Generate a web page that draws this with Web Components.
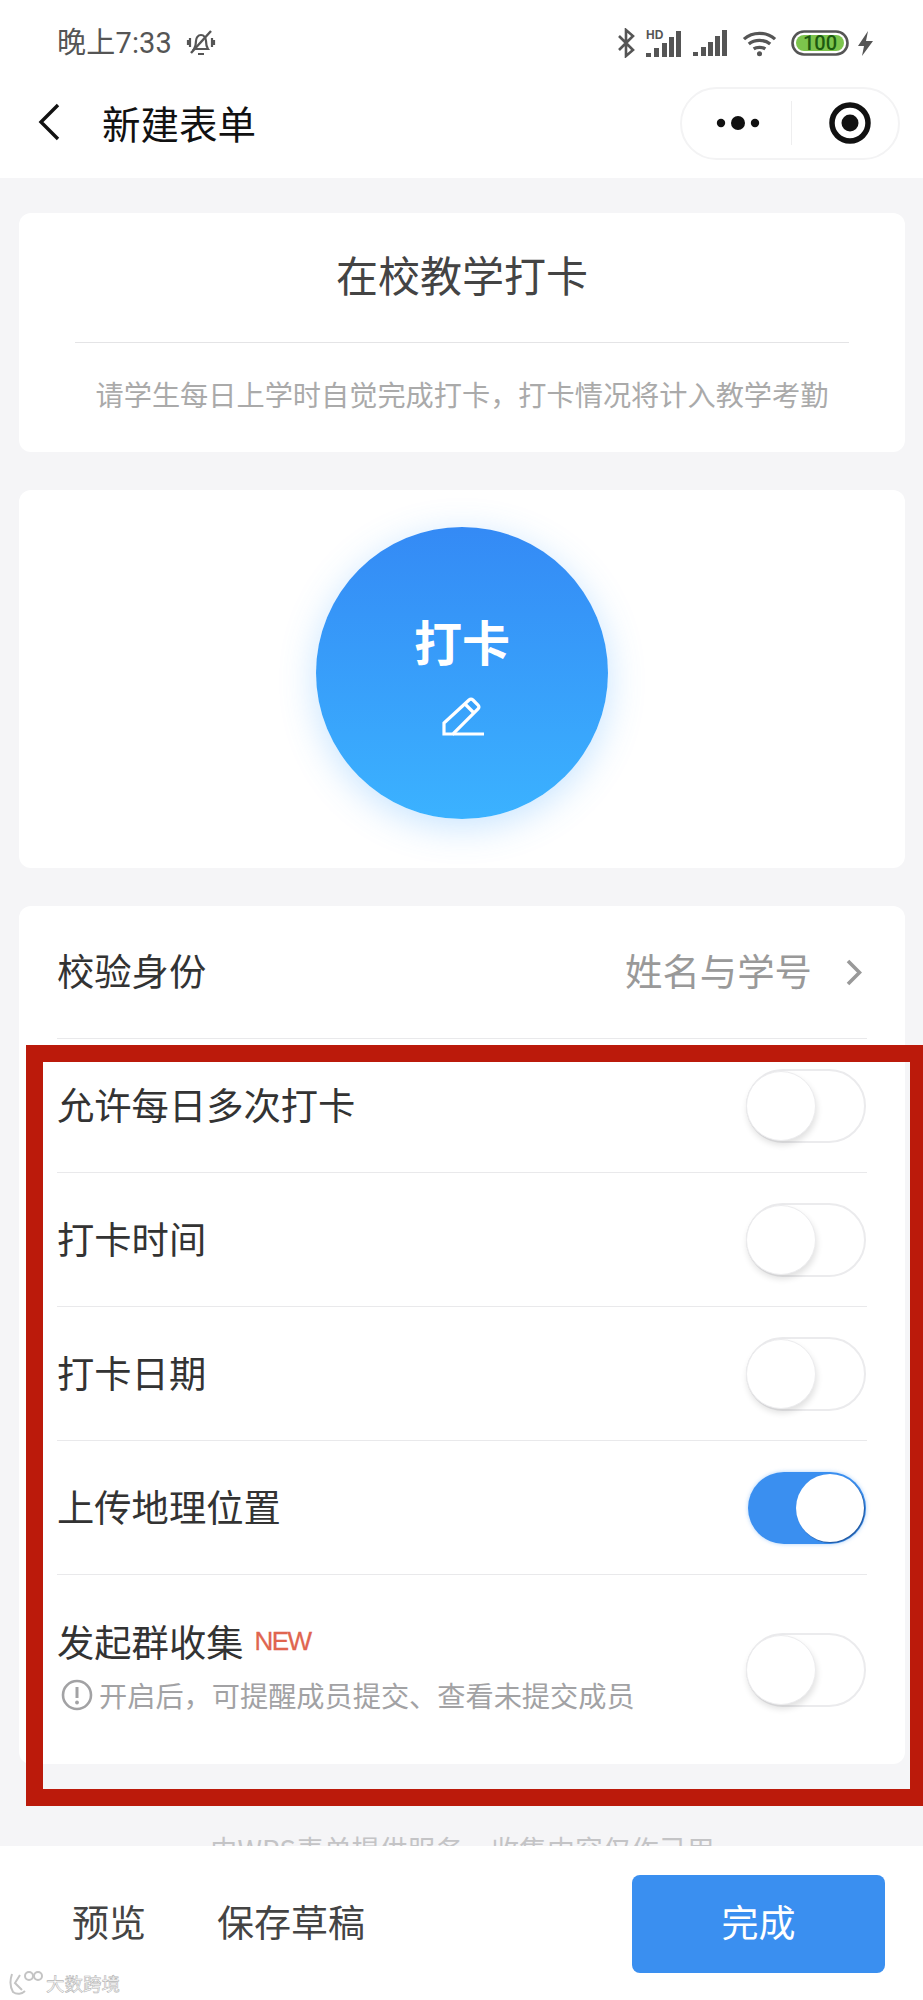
<!DOCTYPE html>
<html lang="zh-CN">
<head>
<meta charset="utf-8">
<title>新建表单</title>
<style>
  html, body { margin: 0; padding: 0; }
  body {
    width: 923px;
    height: 2000px;
    overflow: hidden;
    position: relative;
    display: flex;
    flex-direction: column;
    background: #f5f5f7;
    font-family: "Noto Sans CJK SC", "Liberation Sans", sans-serif;
    color: #333;
  }
</style>
</head>
<body>
  <status-bar></status-bar>
  <nav-bar title="新建表单"></nav-bar>

  <form-body>
    <title-card
      heading="在校教学打卡"
      note="请学生每日上学时自觉完成打卡，打卡情况将计入教学考勤"></title-card>
    <stamp-card label="打卡"></stamp-card>
    <settings-card>
      <link-row label="校验身份" value="姓名与学号"></link-row>
      <toggle-row label="允许每日多次打卡"></toggle-row>
      <toggle-row label="打卡时间"></toggle-row>
      <toggle-row label="打卡日期"></toggle-row>
      <toggle-row label="上传地理位置" on></toggle-row>
      <toggle-row label="发起群收集" badge="NEW" hint="开启后，可提醒成员提交、查看未提交成员" last></toggle-row>
    </settings-card>
    <p slot="foot">由WPS表单提供服务，收集内容仅作己用</p>
  </form-body>

  <bottom-bar></bottom-bar>
  <red-frame></red-frame>
  <water-mark></water-mark>

<script>
const define = (name, css, html, setup) => {
  customElements.define(name, class extends HTMLElement {
    constructor() {
      super();
      this.attachShadow({ mode: "open" });
    }
    connectedCallback() {
      const markup = typeof html === "function" ? html(this) : html;
      this.shadowRoot.innerHTML = `<style>${css}</style>${markup}`;
      if (setup) setup(this);
    }
  });
};

define("status-bar", `
  :host { display: flex; align-items: center; height: 66px; padding: 20px 50px 0 57px; box-sizing: border-box; background: #fff; color: #555; }
  .time { font: 400 29px/1 Roboto, "Noto Sans CJK SC", sans-serif; letter-spacing: .2px; }
  .bell { margin-left: 14px; }
  .right { margin-left: auto; display: flex; align-items: center; }
  svg { display: block; }
  .hd { font: 700 12px/1 "Liberation Sans", sans-serif; fill: #555; }
  .num { font: 500 20px/1 Roboto, sans-serif; fill: #1d5a10; }
`, `
  <span class="time">晚上7:33</span>
  <svg class="bell" width="30" height="30" viewBox="0 0 30 30" fill="none" stroke="#555" stroke-width="2.2">
    <path d="M8 21c2-3 2-5 2-8 0-3 2-6 5-6s5 3 5 6c0 3 0 5 2 8z"/>
    <path d="M12 26h6M4 10v9M2 12v5M26 10v9M28 12v5"/>
    <path d="M5 25L25 3" stroke-width="2.4"/>
  </svg>
  <div class="right">
    <svg width="18" height="30" viewBox="0 0 18 30" fill="none" stroke="#555" stroke-width="2.6" style="margin-right:11px">
      <path d="M2 8l14 14-7 6V2l7 6L2 22"/>
    </svg>
    <svg width="36" height="28" viewBox="0 0 36 28" style="margin-right:11px">
      <text class="hd" x="0" y="10">HD</text>
      <path fill="#555" d="M0 24h5v4H0zM8 19h5v9H8zM16 14h5v14h-5zM23 8h5v20h-5zM30 2h5v26h-5z"/>
    </svg>
    <svg width="35" height="26" viewBox="0 0 35 26" style="margin-right:14px">
      <path fill="#555" d="M0 22h5v4H0zM8 17h5v9H8zM15 12h5v14h-5zM22 6h5v20h-5zM29 0h5v26h-5z"/>
    </svg>
    <svg width="35" height="27" viewBox="0 0 36 27" fill="none" stroke="#555" stroke-width="3.4" style="margin-right:14px">
      <path d="M2 9c9-8 23-8 32 0M7 14c6-5 16-5 22 0M12 19c3-2 9-2 12 0"/>
      <circle cx="18" cy="24" r="2.6" fill="#555" stroke="none"/>
    </svg>
    <svg width="58" height="26" viewBox="0 0 58 26" style="margin-right:9px">
      <rect x="1.5" y="1.5" width="55" height="23" rx="11.5" fill="#fff" stroke="#555" stroke-width="2.6"/>
      <rect x="5" y="5" width="48" height="16" rx="8" fill="#7cc44c"/>
      <text class="num" x="29" y="20" text-anchor="middle">100</text>
    </svg>
    <svg width="15" height="25" viewBox="0 0 15 25"><path fill="#555" d="M10 0L0 15h6L4 25l11-15H8z"/></svg>
  </div>
`);

define("nav-bar", `
  :host { display: flex; align-items: center; height: 112px; padding: 0 23px 0 38px; box-sizing: border-box; background: #fff; color: #111; }
  svg { display: block; }
  h1 { margin: 0 0 0 42px; font: 400 38.5px/1 "Noto Sans CJK SC", sans-serif; }
  .capsule { margin-left: auto; width: 220px; height: 73px; box-sizing: border-box; border: 2px solid #f3f3f4; border-radius: 37px; display: flex; align-items: center; margin-top: 2px; }
  .more { width: 109px; display: flex; justify-content: center; padding-left: 3px; box-sizing: border-box; }
  .sep { width: 1px; height: 44px; background: #eeeeef; }
  .target { margin-left: 37px; }
`, (el) => `
  <svg width="22" height="38" viewBox="0 0 22 38" fill="none" stroke="#111" stroke-width="3.4"><path d="M20 2L3 19l17 17"/></svg>
  <h1>${el.getAttribute("title")}</h1>
  <div class="capsule">
    <div class="more">
      <svg width="44" height="16" viewBox="0 0 44 16" fill="#111"><circle cx="5" cy="8" r="4.2"/><circle cx="22" cy="8" r="7"/><circle cx="39" cy="8" r="4.2"/></svg>
    </div>
    <span class="sep"></span>
    <svg class="target" width="42" height="42" viewBox="0 0 42 42"><circle cx="21" cy="21" r="18" fill="none" stroke="#111" stroke-width="5.5"/><circle cx="21" cy="21" r="8.5" fill="#111"/></svg>
  </div>
`);

define("form-body", `
  :host { display: block; flex: 1; min-height: 0; overflow: hidden; padding: 35px 18px 0 19px; }
  .cards { display: flex; flex-direction: column; gap: 38px; }
  ::slotted(p) { margin: 66px 0 0; text-align: center; font-size: 27.9px; line-height: 38px; color: #c4c4c6; }
`, `
  <div class="cards"><slot></slot></div>
  <slot name="foot"></slot>
`);

define("title-card", `
  :host { display: block; height: 239px; background: #fff; border-radius: 12px; padding: 0 56px; box-sizing: border-box; text-align: center; }
  h2 { margin: 0; height: 129px; line-height: 122px; font-size: 42px; font-weight: 400; color: #444; border-bottom: 1px solid #e4e4e6; }
  p { margin: 0; padding-top: 33px; font-size: 28.2px; line-height: 36px; color: #aaa; white-space: nowrap; }
`, (el) => `
  <h2>${el.getAttribute("heading")}</h2>
  <p>${el.getAttribute("note")}</p>
`);

define("stamp-card", `
  :host { display: flex; justify-content: center; align-items: flex-start; height: 378px; padding-top: 37px; box-sizing: border-box; background: #fff; border-radius: 12px; }
  .stamp { width: 292px; height: 292px; border-radius: 50%; background: linear-gradient(180deg, #348af5, #3bb2ff); box-shadow: 0 8px 36px rgba(70, 165, 255, .3); display: flex; flex-direction: column; align-items: center; color: #fff; }
  b { margin-top: 83px; font-size: 48px; line-height: 60px; font-weight: 700; }
  svg { display: block; margin-top: 27px; margin-left: 2px; }
`, (el) => `
  <div class="stamp">
    <b>${el.getAttribute("label")}</b>
    <svg width="42" height="39" viewBox="0 0 42 39" fill="none" stroke="#fff" stroke-width="3.2">
      <path d="M2 37V26L27 3a3 3 0 0 1 4 0l5 5a3 3 0 0 1 0 4L11 37z"/>
      <path d="M23 7l9 9M11 37h31"/>
    </svg>
  </div>
`);

define("settings-card", `
  :host { display: block; height: 858px; background: #fff; border-radius: 12px; padding: 0 38px; box-sizing: border-box; }
`, `<slot></slot>`);

define("link-row", `
  :host { display: flex; align-items: center; height: 133px; border-bottom: 1px solid #e9e9eb; box-sizing: border-box; font-size: 37.3px; color: #333; }
  span { padding-bottom: 4px; }
  .value { margin-left: auto; color: #999; font-size: 37.4px; }
  svg { display: block; margin: 0 5px 0 34px; }
`, (el) => `
  <span>${el.getAttribute("label")}</span>
  <span class="value">${el.getAttribute("value")}</span>
  <svg width="16" height="27" viewBox="0 0 16 27" fill="none" stroke="#999" stroke-width="3.6"><path d="M2 2l11.5 11.5L2 25"/></svg>
`);

define("toggle-row", `
  :host { display: flex; align-items: center; justify-content: space-between; height: 134px; border-bottom: 1px solid #e9e9eb; box-sizing: border-box; font-size: 37.3px; color: #333; }
  :host([last]) { height: 190px; border-bottom: 0; }
  .text { display: flex; flex-direction: column; padding-bottom: 3px; }
  .main { display: flex; align-items: center; line-height: 54px; }
  .new { margin-left: 11px; font: 400 26px/1 "Liberation Sans", sans-serif; color: #e0654f; letter-spacing: -1.5px; -webkit-text-stroke: .3px #e0654f; }
  .hint { display: flex; align-items: center; margin: 7px 0 0 4px; font-size: 28.2px; line-height: 40px; color: #a2a2a4; white-space: nowrap; }
  .hint svg { display: block; margin-right: 6px; }
  :host([last]) .text { margin-top: -9px; }
`, (el) => {
  const badge = el.getAttribute("badge");
  const hint = el.getAttribute("hint");
  return `
  <div class="text">
    <div class="main"><span>${el.getAttribute("label")}</span>${badge ? `<span class="new">${badge}</span>` : ""}</div>
    ${hint ? `<div class="hint"><svg width="32" height="32" viewBox="0 0 32 32" fill="none" stroke="#a2a2a4" stroke-width="2.6"><circle cx="16" cy="16" r="14"/><path d="M16 8v11" stroke-width="3"/><circle cx="16" cy="23.5" r="1.9" fill="#a2a2a4" stroke="none"/></svg><span>${hint}</span></div>` : ""}
  </div>
  <switch-toggle ${el.hasAttribute("on") ? "on" : ""}></switch-toggle>`;
});

define("switch-toggle", `
  :host { display: flex; align-items: center; justify-content: flex-start; width: 120px; height: 74px; margin-right: 1px; box-sizing: border-box; border: 2px solid #ebebed; border-radius: 37px; background: #fff; }
  .thumb { width: 70px; height: 70px; margin-left: -2px; border-radius: 50%; background: #fff; border: 1px solid #ececee; box-sizing: border-box; box-shadow: 1px 4px 6px rgba(0, 0, 0, .12); }
  :host([on]) { justify-content: flex-end; width: 118px; height: 72px; border: 0; background: #3a8ff0; box-shadow: 0 0 4px rgba(58, 143, 240, .4); }
  :host([on]) .thumb { width: 68px; height: 68px; margin: 0 2px 0 0; border: 0; box-shadow: 1px 1px 1px rgba(20, 60, 120, .7); }
`, `<span class="thumb"></span>`);

define("bottom-bar", `
  :host { display: flex; align-items: center; height: 154px; flex: none; padding: 0 38px 0 72px; box-sizing: border-box; background: #fff; font-size: 37px; color: #444; position: relative; }
  span { padding-bottom: 4px; }
  .draft { margin-left: 71px; }
  button { margin: 2px 0 0 auto; width: 253px; height: 98px; border: 0; border-radius: 8px; background: #3a8ff0; color: #fff; font: inherit; padding: 0 0 6px; }
`, `
  <span>预览</span>
  <span class="draft">保存草稿</span>
  <button>完成</button>
`);

define("red-frame", `
  :host { display: block; position: absolute; left: 26px; top: 1045px; width: 897px; height: 761px; box-sizing: border-box; border: 17px solid #bb1a0b; border-right-width: 13px; pointer-events: none; }
`, ``);

define("water-mark", `
  :host { display: flex; align-items: center; position: absolute; left: 8px; top: 1970px; color: #fff; font-size: 18.5px; line-height: 26px; -webkit-text-stroke: .6px #b5b5b5; }
  svg { display: block; margin-right: 3px; }
`, `
  <svg width="35" height="26" viewBox="0 0 35 26" fill="none" stroke="#c4c4c4" stroke-width="2">
    <path d="M4 4c-2 6-2 13 1 18 4 3 9 2 12-1"/>
    <path d="M12 5l-5 8 7 7"/>
    <circle cx="21" cy="6" r="4"/><circle cx="30" cy="6" r="4"/>
  </svg>
  <span>大数跨境</span>
`);
</script>
</body>
</html>
